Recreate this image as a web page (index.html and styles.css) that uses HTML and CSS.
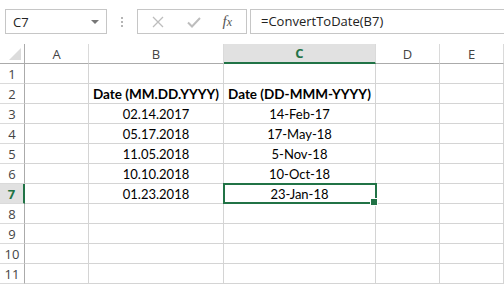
FILE: index.html
```html
<!DOCTYPE html>
<html lang="en">
<head>
    <meta charset="utf-8" />
    <title>ConvertToDate</title>
    <link rel="stylesheet" href="styles.css">
</head>
<body>
    <div class="toolbar">
        <div class="name-box">
            <span>C7</span>
            <span class="drop-arrow"></span>
        </div>
        <div class="grip">
            <span></span><span></span><span></span>
        </div>
        <div class="fx-buttons">
            <svg class="btn-icon" width="14" height="14" viewBox="0 0 14 14">
                <path d="M2 2 L12 12 M12 2 L2 12" stroke="#bdbdbd" stroke-width="1.3" fill="none" />
            </svg>
            <svg class="btn-icon" width="16" height="14" viewBox="0 0 16 14">
                <path d="M2 7.5 L6 11.5 L14 3" stroke="#bdbdbd" stroke-width="2" fill="none" />
            </svg>
            <span class="fx"><i>f</i><i class="x">x</i></span>
        </div>
        <div class="formula">=ConvertToDate(B7)</div>
    </div>

    <div class="sheet">
        <div class="corner"><span class="corner-tri"></span></div>
        <div class="col-head">A</div>
        <div class="col-head">B</div>
        <div class="col-head active">C</div>
        <div class="col-head">D</div>
        <div class="col-head">E</div>

        <div class="row-head">1</div>
        <div class="cell"></div><div class="cell"></div><div class="cell"></div><div class="cell"></div><div class="cell"></div>

        <div class="row-head">2</div>
        <div class="cell"></div><div class="cell bold">Date (MM.DD.YYYY)</div><div class="cell bold">Date (DD-MMM-YYYY)</div><div class="cell"></div><div class="cell"></div>

        <div class="row-head">3</div>
        <div class="cell"></div><div class="cell">02.14.2017</div><div class="cell">14-Feb-17</div><div class="cell"></div><div class="cell"></div>

        <div class="row-head">4</div>
        <div class="cell"></div><div class="cell">05.17.2018</div><div class="cell">17-May-18</div><div class="cell"></div><div class="cell"></div>

        <div class="row-head">5</div>
        <div class="cell"></div><div class="cell">11.05.2018</div><div class="cell">5-Nov-18</div><div class="cell"></div><div class="cell"></div>

        <div class="row-head">6</div>
        <div class="cell"></div><div class="cell">10.10.2018</div><div class="cell">10-Oct-18</div><div class="cell"></div><div class="cell"></div>

        <div class="row-head active">7</div>
        <div class="cell"></div><div class="cell">01.23.2018</div><div class="cell selected">23-Jan-18<span class="fill-handle"></span></div><div class="cell"></div><div class="cell"></div>

        <div class="row-head">8</div>
        <div class="cell"></div><div class="cell"></div><div class="cell"></div><div class="cell"></div><div class="cell"></div>

        <div class="row-head">9</div>
        <div class="cell"></div><div class="cell"></div><div class="cell"></div><div class="cell"></div><div class="cell"></div>

        <div class="row-head">10</div>
        <div class="cell"></div><div class="cell"></div><div class="cell"></div><div class="cell"></div><div class="cell"></div>

        <div class="row-head">11</div>
        <div class="cell"></div><div class="cell"></div><div class="cell"></div><div class="cell"></div><div class="cell"></div>
    </div>
</body>
</html>
```

FILE: styles.css
```css
* {
    box-sizing: border-box;
}

body {
    margin: 0;
    width: 504px;
    height: 284px;
    overflow: hidden;
    background: #ffffff;
    font-family: "Open Sans", "Liberation Sans", sans-serif;
}

/* formula bar */
.toolbar {
    display: flex;
    align-items: center;
    height: 44px;
    padding: 0 0 1px 5px;
}

.name-box {
    display: flex;
    align-items: center;
    justify-content: space-between;
    width: 102px;
    height: 25px;
    padding: 0 7px 0 7px;
    border: 1px solid #c6c6c6;
    font-size: 13px;
    color: #222;
}

.drop-arrow {
    width: 0;
    height: 0;
    border-left: 4px solid transparent;
    border-right: 4px solid transparent;
    border-top: 4px solid #777;
}

.grip {
    width: 30px;
    display: flex;
    flex-direction: column;
    align-items: center;
    gap: 2px;
}

.grip span {
    width: 2px;
    height: 2px;
    background: #b5b5b5;
}

.fx-buttons {
    display: flex;
    align-items: center;
    justify-content: space-between;
    width: 110px;
    height: 25px;
    padding: 0 14px 0 13px;
    border: 1px solid #c6c6c6;
}

.btn-icon {
    display: block;
}

.fx {
    font-family: "Liberation Serif", serif;
    font-size: 15px;
    color: #555;
}

.fx .x {
    font-size: 12px;
}

.formula {
    flex: 1;
    height: 25px;
    margin-left: 3px;
    margin-right: -5px;
    padding: 2px 0 0 10px;
    border: 1px solid #c6c6c6;
    font-size: 13px;
    color: #222;
}

/* grid */
.sheet {
    display: grid;
    grid-template-columns: 25px 64px 135px 152px 64px 64px;
    grid-auto-rows: 20px;
    font-family: "Lato", "Liberation Sans", sans-serif;
}

.corner {
    position: relative;
    border-right: 1px solid #ababab;
    border-bottom: 1px solid #ababab;
}

.corner-tri {
    position: absolute;
    right: 3px;
    bottom: 3px;
    width: 0;
    height: 0;
    border-left: 12px solid transparent;
    border-bottom: 12px solid #dcdcdc;
}

.col-head {
    display: flex;
    align-items: center;
    justify-content: center;
    border-right: 1px solid #dadada;
    border-bottom: 1px solid #ababab;
    font-family: "Open Sans", "Liberation Sans", sans-serif;
    font-size: 13px;
    color: #444;
}

.col-head.active {
    background: #e1e1e1;
    border-bottom: 2px solid #217346;
    color: #217346;
    font-weight: bold;
}

.row-head {
    display: flex;
    align-items: center;
    justify-content: center;
    border-right: 1px solid #ababab;
    border-bottom: 1px solid #dadada;
    font-family: "Open Sans", "Liberation Sans", sans-serif;
    font-size: 13px;
    color: #444;
}

.row-head.active {
    background: #e1e1e1;
    border-right: 2px solid #217346;
    color: #217346;
    font-weight: bold;
}

.cell {
    display: flex;
    align-items: center;
    justify-content: center;
    padding-top: 1px;
    border-right: 1px solid #d4d4d4;
    border-bottom: 1px solid #d4d4d4;
    font-size: 13px;
    color: #000;
    white-space: nowrap;
}

.cell.bold {
    font-size: 13.5px;
    font-weight: bold;
}

.cell.selected {
    position: relative;
}

.cell.selected::after {
    content: "";
    position: absolute;
    left: -1px;
    top: -1px;
    right: -2px;
    bottom: -1px;
    border: 2px solid #217346;
}

.fill-handle {
    position: absolute;
    right: -3px;
    bottom: -3px;
    width: 6px;
    height: 6px;
    background: #217346;
    border: 1px solid #fff;
    z-index: 1;
    box-sizing: content-box;
}
```
